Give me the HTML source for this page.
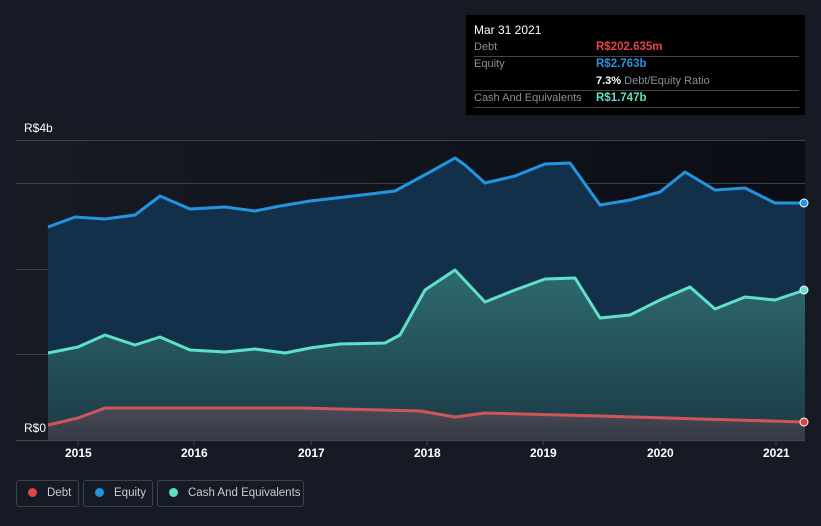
<!DOCTYPE html>
<html><head><meta charset="utf-8"><style>
body{margin:0;background:#151a24;width:821px;height:526px;overflow:hidden;font-family:"Liberation Sans",sans-serif;}
.tt{position:absolute;left:466px;top:15px;width:339px;height:100px;background:#000;color:#fff;font-size:11px}
.row{position:absolute;left:8px;right:6px;border-bottom:1px solid #444;height:17px;line-height:17px}
.lab{color:#8a8e96}
.val{position:absolute;left:122px;font-weight:bold;font-size:11.5px}
.leg{position:absolute;top:480px;height:27px;box-sizing:border-box;border:1px solid #3c424c;border-radius:3px;color:#c8ccd2;font-size:11.5px;line-height:25px;white-space:nowrap;overflow:hidden}
.dot{display:inline-block;width:9px;height:9px;border-radius:50%;margin:0 10px 0 11px;vertical-align:-1px}
.ax{position:absolute;top:446px;color:#fff;font-size:12px;font-weight:bold}
</style></head><body>
<svg width="821" height="526" style="position:absolute;left:0;top:0">
<defs>
<linearGradient id="bg" x1="0" x2="1" y1="0" y2="0"><stop offset="0" stop-color="#161b24"/><stop offset="1" stop-color="#0a0d13"/></linearGradient>
<linearGradient id="cg" x1="0" x2="0" y1="0" y2="1"><stop offset="0" stop-color="#2e6a70"/><stop offset="1" stop-color="#1b3a44"/></linearGradient>
<linearGradient id="dg" x1="0" x2="0" y1="0" y2="1"><stop offset="0" stop-color="#4a4a55"/><stop offset="1" stop-color="#343a46"/></linearGradient>
</defs>
<rect x="16" y="140" width="789" height="300" fill="url(#bg)"/>
<g stroke="#3a3f48" stroke-width="1"><line x1="16" y1="140.5" x2="805" y2="140.5"/><line x1="16" y1="183.5" x2="805" y2="183.5"/><line x1="16" y1="269.5" x2="805" y2="269.5"/><line x1="16" y1="354.5" x2="805" y2="354.5"/></g>
<polygon fill="#12304a" points="48,227 75,217 105,219 135,215 160,196 190,209 225,207 255,211 280,206 310,201 345,197 395,191 430,172 455,158 465,165 485,183 515,176 545,164 570,163 600,205 630,200 660,192 685,172 715,190 745,188 775,203 805,203 805,440 48,440"/>
<polygon fill="url(#cg)" points="48,353 78,347 105,335 135,345 160,337 190,350 225,352 255,349 285,353 310,348 340,344 385,343 400,335 425,290 455,270 485,302 515,290 545,279 575,278 600,318 630,315 660,300 690,287 715,309 745,297 775,300 805,290 805,440 48,440"/>
<polygon fill="url(#dg)" points="48,425 78,418 105,408 300,408 420,411 455,417 485,413 600,416 700,419 805,422 805,440 48,440"/>
<g fill="none" stroke-width="3" stroke-linejoin="round">
<polyline stroke="#2394e0" points="48,227 75,217 105,219 135,215 160,196 190,209 225,207 255,211 280,206 310,201 345,197 395,191 430,172 455,158 465,165 485,183 515,176 545,164 570,163 600,205 630,200 660,192 685,172 715,190 745,188 775,203 805,203"/>
<polyline stroke="#5fe0c8" points="48,353 78,347 105,335 135,345 160,337 190,350 225,352 255,349 285,353 310,348 340,344 385,343 400,335 425,290 455,270 485,302 515,290 545,279 575,278 600,318 630,315 660,300 690,287 715,309 745,297 775,300 805,290"/>
<polyline stroke="#d0555a" points="48,425 78,418 105,408 300,408 420,411 455,417 485,413 600,416 700,419 805,422"/>
</g>
<circle cx="804" cy="203" r="4" fill="#2394e0" stroke="#fff" stroke-width="1"/>
<circle cx="804" cy="290" r="4" fill="#5fe0c8" stroke="#fff" stroke-width="1"/>
<circle cx="804" cy="422" r="4" fill="#e04040" stroke="#fff" stroke-width="1"/>
<line x1="16" y1="440.5" x2="805" y2="440.5" stroke="#444a54"/>
<g stroke="#444a54"><line x1="78" y1="440" x2="78" y2="445"/><line x1="194" y1="440" x2="194" y2="445"/><line x1="311" y1="440" x2="311" y2="445"/><line x1="427" y1="440" x2="427" y2="445"/><line x1="543" y1="440" x2="543" y2="445"/><line x1="660" y1="440" x2="660" y2="445"/><line x1="776" y1="440" x2="776" y2="445"/></g>
</svg>
<div style="position:absolute;left:24px;top:121px;color:#fff;font-size:12px">R$4b</div>
<div style="position:absolute;left:24px;top:421px;color:#fff;font-size:12px">R$0</div>
<div class="ax" style="left:65px">2015</div><div class="ax" style="left:181px">2016</div><div class="ax" style="left:298px">2017</div><div class="ax" style="left:414px">2018</div><div class="ax" style="left:530px">2019</div><div class="ax" style="left:647px">2020</div><div class="ax" style="left:763px">2021</div>
<div class="tt">
<div style="position:absolute;left:8px;top:8px;font-size:12px">Mar 31 2021</div>
<div class="row" style="top:24px"><span class="lab">Debt</span><span class="val" style="color:#e8424a">R$202.635m</span></div>
<div class="row" style="top:41px;height:34px"><span class="lab">Equity</span><span class="val" style="color:#2394e0">R$2.763b</span><div style="position:absolute;left:122px;top:17px;white-space:nowrap"><b>7.3%</b> <span class="lab">Debt/Equity Ratio</span></div></div>
<div class="row" style="top:75px"><span class="lab">Cash And Equivalents</span><span class="val" style="color:#5fe0c8">R$1.747b</span></div>
</div>
<div class="leg" style="left:16px;width:63px"><span class="dot" style="background:#e8424a"></span>Debt</div>
<div class="leg" style="left:83px;width:70px"><span class="dot" style="background:#2394e0"></span>Equity</div>
<div class="leg" style="left:157px;width:147px"><span class="dot" style="background:#5fe0c8"></span>Cash And Equivalents</div>
</body></html>
